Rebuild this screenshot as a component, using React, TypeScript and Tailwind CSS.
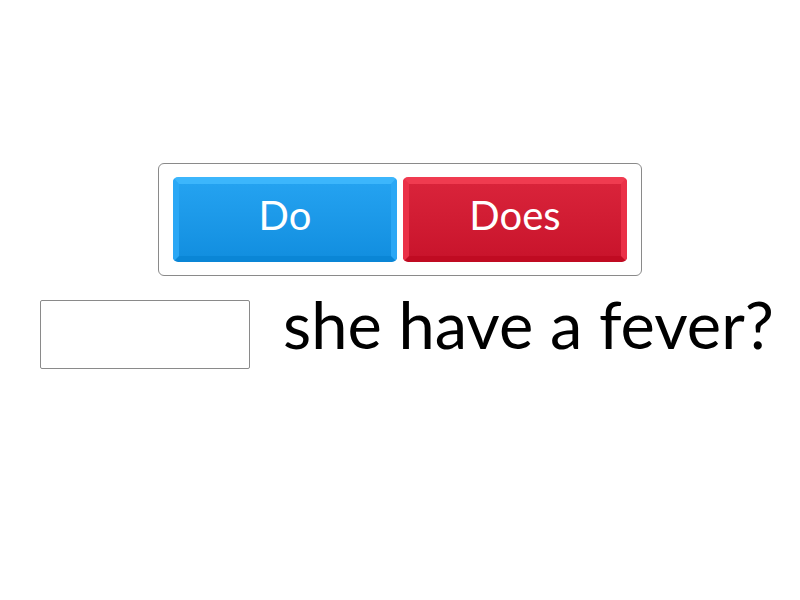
export default function App() {
  return (
    <div
      className="w-[800px] h-[600px] bg-white flex flex-col items-center pt-[163px]"
      style={{ fontFamily: 'Lato, "Open Sans", sans-serif' }}
    >
      <div className="w-[484px] h-[113px] border border-[#8a8a8a] rounded-[6px] flex gap-[6px] px-[14px] pt-[13px] pb-[13px]">
        <button className="flex-1 h-[85px] rounded-[5px] border-t-[7px] border-x-[6px] border-b-[6px] border-t-[#3cb6fc] border-x-[#2aa7f5] border-b-[#0a86d6] bg-gradient-to-b from-[#24a2f0] to-[#128fe0] text-white text-[40px] leading-none flex items-center justify-center pb-[10px]">
          Do
        </button>
        <button className="flex-1 h-[85px] rounded-[5px] border-t-[7px] border-x-[6px] border-b-[6px] border-t-[#f03b50] border-x-[#ea3047] border-b-[#c00b22] bg-gradient-to-b from-[#d9233a] to-[#c9142c] text-white text-[40px] leading-none flex items-center justify-center pb-[10px]">
          Does
        </button>
      </div>
      <div className="flex items-start gap-[33px] mt-[24px] ml-[14px]">
        <div className="w-[210px] h-[69px] border border-[#8a8a8a] rounded-[2px]" />
        <span className="text-[65px] leading-none text-black -mt-[8px]">she have a fever?</span>
      </div>
    </div>
  );
}
